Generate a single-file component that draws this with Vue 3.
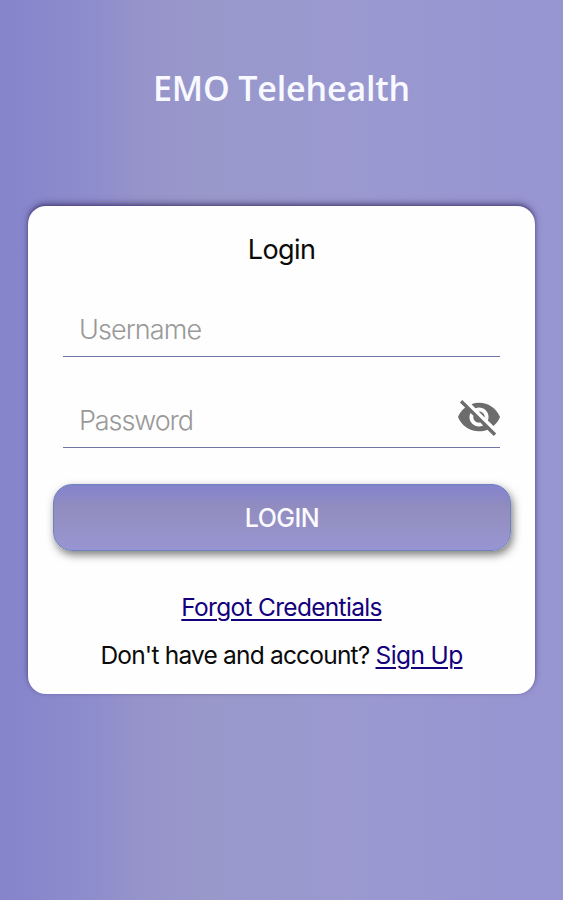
<template>
  <div class="login-page">
    <h1 class="app-title">EMO Telehealth</h1>

    <form class="login-card" @submit.prevent="login">
      <h2 class="card-title">Login</h2>

      <div class="field">
        <input v-model="username" class="field-input username" type="text" placeholder="Username" />
      </div>

      <div class="field">
        <input
          v-model="password"
          class="field-input password"
          :type="showPassword ? 'text' : 'password'"
          placeholder="Password"
        />
        <button class="toggle-btn" type="button" aria-label="Toggle password" @click="showPassword = !showPassword">
          <svg viewBox="0 0 512 512" width="48" height="48">
            <path
              d="M256.1 144.8c56.2 0 101.9 45.3 101.9 101.1 0 13.1-2.6 25.5-7.3 37l59.5 59c30.8-25.5 55-58.4 69.9-96-35.3-88.7-122.3-151.6-224.2-151.6-28.5 0-55.8 5.1-81.1 14.1l44 43.7c11.6-4.6 24.1-7.3 37.3-7.3zM52.4 89.7l46.5 46.1 9.4 9.3c-33.9 26-60.4 60.8-76.3 100.8 35.2 88.7 122.2 151.6 224.1 151.6 31.6 0 61.7-6.1 89.2-17l8.6 8.5 59.7 59 25.9-25.7L78.2 64 52.4 89.7zM165 201.4l31.6 31.3c-1 4.2-1.6 8.7-1.6 13.1 0 33.5 27.3 60.6 61.1 60.6 4.5 0 9-.6 13.2-1.6l31.6 31.3c-13.6 6.7-28.7 10.7-44.8 10.7-56.2 0-101.9-45.3-101.9-101.1 0-15.8 4.1-30.7 10.8-44.3zm87.8-15.7l64.2 63.7.4-3.2c0-33.5-27.3-60.6-61.1-60.6l-3.5.1z"
            />
          </svg>
        </button>
      </div>

      <button class="login-btn" type="submit"><span>LOGIN</span></button>

      <p class="forgot"><a href="#">Forgot Credentials</a></p>
      <p class="signup">
        <span>Don't have and account?</span>
        <a href="#">Sign Up</a>
      </p>
    </form>
  </div>
</template>

<script setup>
import { ref } from 'vue';

const username = ref('');
const password = ref('');
const showPassword = ref(false);

const login = () => {
  if (!username.value || !password.value) return;
  password.value = '';
};
</script>

<style>
body {
  margin: 0;
}
</style>

<style scoped>
.login-page {
  box-sizing: border-box;
  height: 900px;
  padding: 64px 28px 0;
  background: linear-gradient(90deg, #8584cc 0%, #8d8ccd 15%, #9593ca 24%, #9998cb 36%, #9a99cf 55%, #9795d2 100%);
  font-family: Inter, "Liberation Sans", sans-serif;
  overflow: hidden;
}

.app-title {
  margin: 0 0 94px;
  font-family: "Open Sans", sans-serif;
  font-size: 34px;
  font-weight: 600;
  line-height: 48px;
  letter-spacing: -0.15px;
  text-align: center;
  color: #f8f9ff;
}

.login-card {
  box-sizing: border-box;
  display: flex;
  flex-direction: column;
  width: 507px;
  height: 488px;
  padding: 27px 25px 0;
  background: #fefefe;
  border-radius: 18px;
  box-shadow: 0 -3px 6px rgba(50, 40, 90, 0.5), 0 -1px 3px rgba(60, 45, 120, 0.5);
}

.card-title {
  margin: 0 0 50px;
  font-size: 27px;
  font-weight: 400;
  line-height: 34px;
  letter-spacing: -0.6px;
  text-align: center;
  color: #0a0a0a;
}

.field {
  box-sizing: border-box;
  display: flex;
  align-items: center;
  height: 40px;
  margin: 0 10px 51px;
  border-bottom: 1px solid #6f76a0;
}

.field-input {
  flex: 1;
  min-width: 0;
  padding: 0 0 13px 16px;
  border: none;
  outline: none;
  background: transparent;
  font-family: inherit;
  font-size: 27px;
  font-weight: 300;
  line-height: 34px;
  color: #222;
}

.username {
  letter-spacing: -0.9px;
}

.password {
  letter-spacing: -1.1px;
}

.field-input::placeholder {
  color: #999;
  opacity: 1;
}

.toggle-btn {
  height: 48px;
  margin: 0 -3px 20px 0;
  padding: 0;
  border: none;
  background: none;
  cursor: pointer;
}

.toggle-btn svg {
  display: block;
  fill: #6c6c6c;
}

.login-btn {
  box-sizing: border-box;
  height: 67px;
  margin: -15px -1px 39px 0;
  padding: 1px 0 0;
  border: 1px solid #6d83bd;
  border-radius: 19px;
  background: linear-gradient(180deg, #8583cc 0%, #8987c9 15%, #918dbf 34%, #9490c4 55%, #9693cc 78%, #9794d2 100%);
  box-shadow: 2px 4px 8px rgba(0, 0, 0, 0.5);
  font-family: inherit;
  font-size: 25px;
  font-weight: 500;
  letter-spacing: -0.5px;
  color: #fbfbff;
  cursor: pointer;
}

.forgot,
.signup {
  margin: 0;
  font-size: 24.5px;
  line-height: 34px;
  text-align: center;
  white-space: nowrap;
  color: #0a0a0a;
}

.forgot {
  margin-bottom: 14px;
  letter-spacing: -0.7px;
}

.signup {
  display: flex;
  justify-content: center;
  gap: 6px;
  letter-spacing: -0.8px;
}

.signup a {
  letter-spacing: -0.6px;
}

a {
  color: #14007c;
  text-decoration: underline;
  text-decoration-thickness: 2px;
  text-underline-offset: 3px;
}
</style>
